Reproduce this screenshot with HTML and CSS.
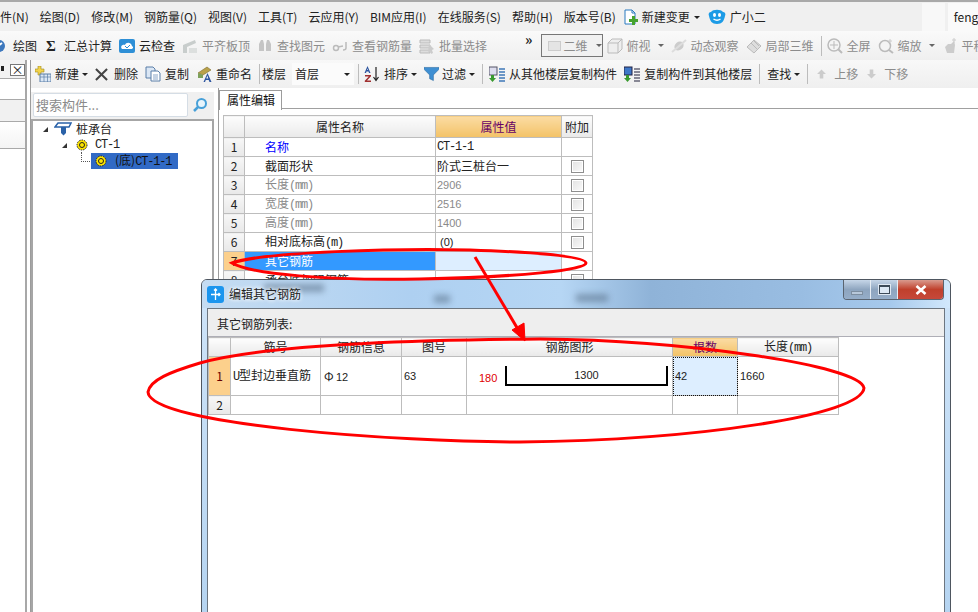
FILE: index.html

```html
<!DOCTYPE html>
<html lang="zh-CN">
<head>
  <meta charset="UTF-8" />
  <title>属性编辑</title>
  <link rel="stylesheet" href="styles.css">
</head>
<body>
  <div class="menubar">
    <span>件(N)</span><span>绘图(D)</span><span>修改(M)</span><span>钢筋量(Q)</span><span>视图(V)</span><span>工具(T)</span><span>云应用(Y)</span><span>BIM应用(I)</span><span>在线服务(S)</span><span>帮助(H)</span><span>版本号(B)</span>
    <span class="tool tool-change">
      <svg class="ico" viewBox="0 0 16 16"><path d="M3 1h7l3 3v11H3z" fill="#fff" stroke="#2b7bc0"/><path d="M10 1v3h3" fill="none" stroke="#2b7bc0"/><path d="M10 7h3v3h3v3h-3v3h-3v-3H7v-3h3z" fill="#46a32f"/></svg>
      新建变更<i class="caret"></i>
    </span>
    <span class="tool tool-q">
      <svg class="ico ico-q" viewBox="0 0 18 18"><path d="M3 4C5 1 13 1 15 4c2 0 3 2 2 4-1 5-3 8-8 8S2 13 1 8C0 6 1 4 3 4z" fill="#1c9be6"/><ellipse cx="6.500" cy="7" rx="1.500" ry="2" fill="#fff"/><ellipse cx="11.500" cy="7" rx="1.500" ry="2" fill="#fff"/><path d="M5.500 11q3.500 2.500 7 0" fill="none" stroke="#fff" stroke-width="1.300"/></svg>
      广小二
    </span>
    <span class="user-gap"></span>
    <span class="user">feng</span>
  </div>

  <div class="toolbar tb-main">
    <span class="tool tool-first">
      <svg class="ico" viewBox="0 0 16 16"><circle cx="6" cy="8" r="6" fill="#3d78bd"/><path d="M2 10l7-5" stroke="#fff" stroke-width="2"/></svg>
      绘图
    </span>
    <span class="tool tool-sum"><b class="sigma">Σ</b>汇总计算</span>
    <span class="tool">
      <svg class="ico" viewBox="0 0 16 16"><rect x="0" y="1" width="16" height="14" rx="2" fill="#2e8fd6"/><path d="M3 11c-2-2 0-5 3-4 1-3 6-3 7 1 2 1 1 3-1 3z" fill="#fff"/><path d="M6 8l2 2 3-3" fill="none" stroke="#2e8fd6"/></svg>
      云检查
    </span>
    <span class="tool off">
      <svg class="ico" viewBox="0 0 16 16"><path d="M1 7l12-5 1 3-9 4v6H1z" fill="#c8cdcc"/><path d="M7 10h8v5H7z" fill="#dcdfde"/></svg>
      平齐板顶
    </span>
    <span class="tool off">
      <svg class="ico" viewBox="0 0 16 16"><path d="M2 6l2-4h2l1 4v7H2zM9 6l1-4h2l2 4v7H9z" fill="#c5c5c5"/></svg>
      查找图元
    </span>
    <span class="tool off">
      <svg class="ico" viewBox="0 0 16 16"><circle cx="4" cy="10" r="2.500" fill="none" stroke="#bbb" stroke-width="1.500"/><path d="M6 9l5-1M14 4v6q0 2-3 2" fill="none" stroke="#bbb" stroke-width="1.500"/></svg>
      查看钢筋量
    </span>
    <span class="tool off">
      <svg class="ico" viewBox="0 0 16 16"><path d="M1 2h10v3H1zM1 7h10v3H1zM1 12h10v3H1z" fill="#ddd" stroke="#bbb"/><path d="M10 6l5 5-2 1 1 3-2 1-1-3-2 1z" fill="#ccc"/></svg>
      批量选择
    </span>
    <span class="chevrons">»</span>
    <span class="view-box">
      <i class="view-swatch"></i>二维<i class="caret"></i>
    </span>
    <span class="tool off tool-tight">
      <svg class="ico" viewBox="0 0 16 16"><path d="M1 5l4-4h10v10l-4 4H1zM1 5h10v10M11 5l4-4" fill="#eee" stroke="#bbb"/></svg>
      俯视<i class="caret"></i>
    </span>
    <span class="tool off">
      <svg class="ico" viewBox="0 0 16 16"><ellipse cx="8" cy="8" rx="5" ry="4" transform="rotate(-40 8 8)" fill="#ccc"/><path d="M1 14Q6 10 15 2" stroke="#ddd" stroke-width="2" fill="none"/></svg>
      动态观察
    </span>
    <span class="tool off">
      <svg class="ico" viewBox="0 0 16 16"><path d="M1 9l7-7 7 6-7 7z" fill="#ddd" stroke="#bbb"/><path d="M5 5l6 6M8 3l5 5" stroke="#bbb"/></svg>
      局部三维
    </span>
    <i class="sep sep-main"></i>
    <span class="tool off">
      <svg class="ico" viewBox="0 0 16 16"><circle cx="7" cy="7" r="6" fill="#f4f4f4" stroke="#bbb" stroke-width="1.500"/><path d="M11 11l4 4" stroke="#bbb" stroke-width="2"/><path d="M7 3v8M3 7h8" stroke="#bbb"/></svg>
      全屏
    </span>
    <span class="tool off tool-tight">
      <svg class="ico" viewBox="0 0 16 16"><circle cx="7" cy="8" r="5.500" fill="#f4f4f4" stroke="#bbb" stroke-width="1.500"/><path d="M11 12l4 3" stroke="#bbb" stroke-width="2"/><path d="M12 1v4M10 3h4" stroke="#ccc"/></svg>
      缩放<i class="caret"></i>
    </span>
    <span class="tool off">
      <svg class="ico" viewBox="0 0 16 16"><path d="M3 9l3-3 3 0 3-3 1 4-1 8H5z" fill="#ccc"/><path d="M12 0v5M10 2h4" stroke="#ccc"/></svg>
      平移
    </span>
  </div>

  <div class="workspace">
    <div class="side-strip">
      <div class="strip-head"><i class="pin"></i><i class="close-box">×</i></div>
      <div class="strip-row"></div>
      <div class="strip-row strip-grey"></div>
      <div class="strip-row strip-tall"></div>
    </div>

    <div class="work-main">
      <div class="toolbar tb-edit">
        <span class="tool">
          <svg class="ico" viewBox="0 0 16 16"><path d="M3 0h3v3h3v3H6v3H3V6H0V3h3z" fill="#f3d34a" stroke="#a08a20" stroke-width=".6"/><rect x="5" y="8" width="11" height="8" fill="#dbe7f5" stroke="#5b7fa8"/><path d="M5 11h11M9 8v8M12.500 8v8" stroke="#5b7fa8" stroke-width=".7"/></svg>
          新建<i class="caret"></i>
        </span>
        <span class="tool tool-del">
          <svg class="ico ico-x" viewBox="0 0 14 14"><path d="M1 1l12 12M13 1L1 13" stroke="#444" stroke-width="2.200"/></svg>
          删除
        </span>
        <span class="tool">
          <svg class="ico" viewBox="0 0 16 16"><path d="M1 1h7l2 2v9H1z" fill="#dbe7f5" stroke="#5b7fa8"/><path d="M6 5h7l2 2v8H6z" fill="#fff" stroke="#5b7fa8"/><path d="M8 9h5M8 11h5M8 13h5" stroke="#8aa6c8"/></svg>
          复制
        </span>
        <span class="tool">
          <svg class="ico" viewBox="0 0 16 16"><path d="M2 7l9-6 4 3-8 5z" fill="#b9a14a" stroke="#7c6b2c" stroke-width=".6"/><path d="M2 7l5 2v3H2z" fill="#7da05a"/><path d="M11.500 7L15.500 16H13.500L12.700 14H9.800L9 16H7.500zM11.300 9.500L10.300 12.500H12.300z" fill="#2d55a0"/></svg>
          重命名
        </span>
        <i class="sep"></i>
        <span class="floor-label">楼层</span>
        <span class="floor-select">首层<i class="caret"></i></span>
        <i class="sep sep-floor"></i>
        <span class="tool">
          <svg class="ico" viewBox="0 0 16 16"><path d="M3.500 0L6.500 7H5L4.500 5.500h-2L2 7H.5zM3.500 2.500L3 4h1z" fill="#2d55a0"/><path d="M1 9h6v1.300L3 14.500h4V16H.8v-1.300L4.800 10.500H1z" fill="#a03030"/><path d="M12 1v13M9.500 11l2.500 3.500 2.500-3.500" fill="none" stroke="#222" stroke-width="1.200"/></svg>
          排序<i class="caret"></i>
        </span>
        <span class="tool tool-filter">
          <svg class="ico" viewBox="0 0 16 16"><path d="M0 1h16v2l-6 6v6l-4-2V9L0 3z" fill="#3f8fd2" stroke="#27679e" stroke-width=".6"/></svg>
          过滤<i class="caret"></i>
        </span>
        <i class="sep sep-close"></i>
        <span class="tool">
          <svg class="ico" viewBox="0 0 16 16"><rect x="0" y="1" width="8" height="8" fill="#dde" stroke="#556"/><path d="M2 9h3v3h2l-3.500 4L0 12h2z" fill="#3a9a30"/><path d="M10 3h6M10 6h6M10 9h6M10 12h6M10 15h6" stroke="#3f78b8" stroke-width="1.500"/></svg>
          从其他楼层复制构件
        </span>
        <span class="tool">
          <svg class="ico" viewBox="0 0 16 16"><rect x="0" y="1" width="8" height="8" fill="#3f78c8" stroke="#224"/><path d="M2 9h3v3h2l-3.500 4L0 12h2z" fill="#3a9a30"/><path d="M10 3h6M10 6h6M10 9h6M10 12h6M10 15h6" stroke="#667" stroke-width="1.500"/></svg>
          复制构件到其他楼层
        </span>
        <i class="sep"></i>
        <span class="tool">查找<i class="caret"></i></span>
        <i class="sep"></i>
        <span class="tool off tool-move">
          <svg class="ico ico-arrow" viewBox="0 0 10 10"><path d="M5 0l5 5H7v5H3V5H0z" fill="#ccc"/></svg>
          上移
        </span>
        <span class="tool off tool-move">
          <svg class="ico ico-arrow" viewBox="0 0 10 10"><path d="M5 10l5-5H7V0H3v5H0z" fill="#ccc"/></svg>
          下移
        </span>
      </div>

      <div class="panels">
        <div class="tree-col">
          <div class="search">
            <span class="search-box">搜索构件...</span>
            <svg class="search-ico" viewBox="0 0 16 16"><circle cx="9.500" cy="6.500" r="4.500" fill="#e8f5fc" stroke="#47a0d8" stroke-width="2"/><path d="M6 10l-4 4" stroke="#47a0d8" stroke-width="2.500"/></svg>
          </div>
          <div class="tree">
            <div class="node node-root">
              <i class="expander"></i>
              <svg class="ico ico-pile" viewBox="0 0 18 14"><path d="M4 1h13l-2 4H1z" fill="#fff" stroke="#2a62a8" stroke-width="1.500"/><path d="M7 5h5v6l-2.500 2.500L7 11z" fill="#2a62a8"/></svg>
              <span>桩承台</span>
            </div>
            <div class="node node-ct">
              <i class="expander"></i>
              <svg class="ico ico-gear" viewBox="0 0 12 12"><circle cx="6" cy="6" r="5" fill="#ffe600" stroke="#222" stroke-dasharray="1.500 1"/><circle cx="6" cy="6" r="2.500" fill="none" stroke="#222"/></svg>
              <span class="mono">CT-1</span>
            </div>
            <div class="node node-leaf">
              <i class="connector"></i>
              <span class="leaf-sel">
                <svg class="ico ico-gear" viewBox="0 0 12 12"><circle cx="6" cy="6" r="5" fill="#ffe600" stroke="#222" stroke-dasharray="1.500 1"/><circle cx="6" cy="6" r="2.500" fill="none" stroke="#222"/></svg>
                <span class="leaf-text">(底)<span class="mono">CT-1-1</span></span>
              </span>
            </div>
          </div>
        </div>

        <div class="props">
          <div class="tabs"><span class="tab">属性编辑</span></div>
          <table class="grid prop-grid">
            <colgroup><col class="c-pn"><col class="c-pname"><col class="c-pval"><col class="c-pext"></colgroup>
            <tr class="head"><th></th><th>属性名称</th><th class="hot">属性值</th><th>附加</th></tr>
            <tr><td class="num">1</td><td class="name link">名称</td><td class="mono">CT-1-1</td><td></td></tr>
            <tr><td class="num">2</td><td class="name">截面形状</td><td>阶式三桩台一</td><td class="chk"><i></i></td></tr>
            <tr class="muted"><td class="num">3</td><td class="name">长度<span class="mono">(mm)</span></td><td class="digits">2906</td><td class="chk"><i></i></td></tr>
            <tr class="muted"><td class="num">4</td><td class="name">宽度<span class="mono">(mm)</span></td><td class="digits">2516</td><td class="chk"><i></i></td></tr>
            <tr class="muted"><td class="num">5</td><td class="name">高度<span class="mono">(mm)</span></td><td class="digits">1400</td><td class="chk"><i></i></td></tr>
            <tr><td class="num">6</td><td class="name">相对底标高<span class="mono">(m)</span></td><td class="digits">&nbsp;(0)</td><td class="chk"><i></i></td></tr>
            <tr class="active"><td class="num">7</td><td class="name">其它钢筋</td><td class="val"></td><td></td></tr>
            <tr><td class="num">8</td><td class="name">承台底加强钢筋</td><td></td><td class="chk"><i></i></td></tr>
          </table>
        </div>
      </div>
    </div>
  </div>

  <div class="dialog">
    <div class="dlg-title">
      <i class="ghost ghost-a"></i><i class="ghost ghost-b"></i><i class="ghost ghost-c"></i>
      <svg class="dlg-ico" viewBox="0 0 17 17"><rect width="17" height="17" rx="3" fill="#1b95ee"/><path d="M8.500 3v11M4 8.500h9M7 4.500l1.500-1.500 1.500 1.500M11.500 7l1.500 1.500-1.500 1.500" fill="none" stroke="#fff" stroke-width="1.300"/></svg>
      <span class="dlg-name">编辑其它钢筋</span>
      <div class="win-btns">
        <span class="win-btn"><i class="glyph-min"></i></span>
        <span class="win-btn"><i class="glyph-max"></i></span>
        <span class="win-btn win-close">
          <svg viewBox="0 0 12 10" class="glyph-x"><path d="M1.500 1l9 8M10.500 1l-9 8" stroke="#fff" stroke-width="2.600"/></svg>
        </span>
      </div>
    </div>
    <div class="dlg-body">
      <div class="dlg-label">其它钢筋列表:</div>
      <table class="grid bar-grid">
        <colgroup><col class="c-n"><col class="c-code"><col class="c-info"><col class="c-shape"><col class="c-fig"><col class="c-count"><col class="c-len"></colgroup>
        <tr class="head"><th></th><th>筋号</th><th>钢筋信息</th><th>图号</th><th>钢筋图形</th><th class="hot">根数</th><th>长度<span class="mono">(mm)</span></th></tr>
        <tr class="bar-row">
          <td class="num num-hot">1</td>
          <td><span class="mono">U</span>型封边垂直筋</td>
          <td class="info-cell"><span class="sym">Φ</span><span class="digits">12</span></td>
          <td class="digits">63</td>
          <td>
            <div class="bar-fig">
              <span class="digits bar-side">180</span>
              <span class="digits bar-shape">1300</span>
            </div>
          </td>
          <td class="digits cell-focus">42</td>
          <td class="digits">1660</td>
        </tr>
        <tr><td class="num">2</td><td></td><td></td><td></td><td></td><td></td><td></td></tr>
      </table>
    </div>
  </div>

  <svg class="marks" viewBox="0 0 978 612">
    <path d="M232 263C262 252 400 248 470 250C530 252 586 256 586 263C586 270 520 277 420 279C330 281 250 274 232 263Z"/>
    <path d="M148 392C150 380 170 372 200 363C260 346 400 340 540 339C680 340 860 365 864 388C862 415 700 440 520 442C400 442 150 425 148 392Z"/>
    <path d="M475 257L519 331"/>
    <path class="head-mark" d="M512 330L524 323L525 341Z"/>
  </svg>
</body>
</html>
```

FILE: styles.css

```css
* {
  box-sizing: border-box;
}
html, body {
  margin: 0;
  padding: 0;
}
body {
  position: relative;
  width: 978px;
  height: 612px;
  overflow: hidden;
  background: #fff;
  color: #222;
  font-family: "Noto Sans CJK SC", "Liberation Sans", sans-serif;
  font-size: 12px;
  line-height: 16px;
}
i {
  font-style: normal;
}
.mono {
  font-family: "Liberation Mono", "Noto Sans CJK SC", monospace;
  font-size: 12px;
  letter-spacing: -1.2px;
}
.digits {
  font-family: "Liberation Sans", sans-serif;
  font-size: 11px;
}

/* menu */
.menubar {
  height: 31px;
  padding-top: 1px;
  display: flex;
  align-items: center;
  gap: 11px;
  background: #f0f0f0;
  border-top: 2px solid #a9a9a9;
  white-space: nowrap;
}
.tool {
  display: flex;
  align-items: center;
  gap: 4px;
  white-space: nowrap;
}
.tool-change {
  margin-left: -5px;
}
.ico {
  width: 16px;
  height: 16px;
  flex: none;
}
.ico-q {
  width: 18px;
  height: 18px;
}
.tool-q {
  margin-left: -3px;
}
.user-gap {
  width: 23px;
  height: 28px;
  margin-left: 145px;
  background: #f8f8f8;
}
.user {
  margin-left: -8px;
  padding-left: 6px;
  width: 30px;
  height: 28px;
  line-height: 28px;
  background: #fafafa;
}
.caret {
  display: inline-block;
  width: 0;
  height: 0;
  border-top: 3px solid #222;
  border-left: 3px solid transparent;
  border-right: 3px solid transparent;
}

/* toolbars */
.toolbar {
  display: flex;
  align-items: center;
  white-space: nowrap;
}
.tb-main {
  height: 29px;
  gap: 7px;
  background: linear-gradient(#fafafa, #efefef);
}
.off {
  color: #8c8c8c;
}
.off .caret {
  border-top-color: #666;
}
.tool-first {
  margin-left: -7px;
  margin-right: 2px;
}
.tool-sum {
  gap: 8px;
}
.sigma {
  width: 10px;
  font-size: 15px;
  font-family: "Liberation Serif", serif;
}
.chevrons {
  margin-left: 31px;
  margin-top: -14px;
  width: 12px;
  font-size: 14px;
  font-weight: 700;
  line-height: 14px;
}
.view-box {
  display: flex;
  align-items: center;
  width: 62px;
  height: 23px;
  padding-left: 3px;
  margin-left: 1px;
  margin-right: -3px;
  gap: 3px;
  color: #8c8c8c;
  border: 1px solid #777;
  background: #f1f1f1;
}
.view-box .caret {
  margin-left: 5px;
  border-top-color: #666;
}
.view-swatch {
  width: 14px;
  height: 10px;
  margin-left: 3px;
  border: 1px solid #ccc;
  background: #e4e4e4;
}
.tool-tight .caret {
  margin-left: 3px;
}
.sep {
  width: 1px;
  height: 20px;
  flex: none;
  background: #bcbcbc;
}
.sep-main {
  margin-right: -2px;
}
.sep-floor {
  margin: 0 -2px 0 -3px;
}
.sep-close {
  margin: 0 -1px 0 0;
}

.workspace {
  display: flex;
  height: 552px;
}
.side-strip {
  width: 31px;
  flex: none;
  border-right: 1px solid #9c9c9c;
  position: relative;
}
.side-strip::after {
  content: "";
  position: absolute;
  left: 25px;
  top: 0;
  bottom: 0;
  width: 2px;
  background: #a8a8a8;
}
.strip-head {
  height: 18px;
  padding-top: 4px;
  display: flex;
  justify-content: flex-end;
  align-items: flex-start;
  width: 25px;
  background: #f2f2f2;
}
.pin {
  width: 3px;
  height: 5px;
  margin: 2px 6px 0 0;
  background: #222;
}
.close-box {
  width: 15px;
  height: 12px;
  line-height: 10px;
  text-align: center;
  border: 1px solid #777;
  background: #fff;
}
.strip-row {
  width: 25px;
  height: 22px;
  border-bottom: 1px solid #a9a9a9;
  border-top: 1px solid #a9a9a9;
  background: #fff;
}
.strip-grey {
  background: #f1f1f1;
  border-top: 0;
}
.strip-tall {
  height: 27px;
  border-top: 0;
  background: linear-gradient(#fff, #f4f4f4);
}

.work-main {
  flex: 1;
  min-width: 0;
}
.tb-edit {
  height: 28px;
  gap: 7px;
  padding-left: 4px;
  background: linear-gradient(#f8f8f8, #efefef);
}
.tb-edit .caret {
  margin-left: -1px;
}
.tool-del {
  gap: 6px;
}
.tool-filter .ico {
  width: 15px;
  margin-right: -1px;
}
.ico-x {
  width: 13px;
  height: 13px;
}
.floor-label {
  margin-left: -5px;
}
.floor-select {
  display: flex;
  align-items: center;
  justify-content: space-between;
  width: 62px;
  height: 22px;
  padding: 0 4px 0 3px;
  margin-left: -1px;
  background: #fbfbfb;
}
.ico-arrow {
  width: 9px;
  height: 10px;
}
.tool-move {
  gap: 8px;
  margin-left: 2px;
}

.panels {
  display: flex;
  height: 524px;
}
.tree-col {
  width: 183px;
  flex: none;
}
.search {
  height: 31px;
  padding: 5px 0 0 2px;
  display: flex;
  background: linear-gradient(#fff 4px, #f0f0f0 4px);
}
.search-box {
  width: 155px;
  height: 24px;
  line-height: 22px;
  padding-left: 2px;
  color: #8a8a8a;
  font-size: 13px;
  background: #fff;
  border: 1px solid #d5dde5;
  border-radius: 2px;
}
.search-ico {
  width: 16px;
  height: 16px;
  margin: 4px 0 0 4px;
}
.tree {
  height: 493px;
  border: 2px solid #a6a6a6;
  border-bottom: 0;
  background: #fff;
}
.node {
  display: flex;
  align-items: center;
  height: 16px;
}
.expander {
  width: 0;
  height: 0;
  border-bottom: 5px solid #333;
  border-left: 5px solid transparent;
}
.node-root {
  padding-left: 10px;
  height: 18px;
  margin-top: -1px;
  margin-bottom: -1px;
}
.ico-pile {
  width: 18px;
  height: 14px;
  margin: 0 4px 0 6px;
}
.node-ct {
  padding-left: 29px;
}
.ico-gear {
  width: 12px;
  height: 12px;
  margin: 0 7px 0 9px;
}
.node-leaf {
  padding-left: 48px;
}
.connector {
  width: 9px;
  height: 10px;
  margin-top: -8px;
  border-left: 1px dotted #555;
  border-bottom: 1px dotted #555;
}
.leaf-sel {
  display: flex;
  align-items: center;
  width: 87px;
  height: 16px;
  margin-left: 1px;
  background: #316ac5;
}
.leaf-sel .ico-gear {
  margin: 0 8px 0 4px;
}
.leaf-text {
  color: #111;
}

.props {
  flex: 1;
  min-width: 0;
  border-left: 1px solid #9c9c9c;
  margin-left: 4px;
  position: relative;
}
.tabs {
  height: 21px;
  padding-top: 2px;
  border-bottom: 1px solid #a0a0a0;
}
.tab {
  display: block;
  width: 63px;
  height: 20px;
  line-height: 18px;
  padding-left: 7px;
  color: #111;
  background: #fff;
  border: 1px solid #9c9c9c;
  border-bottom: 0;
}

/* grids */
.grid {
  table-layout: fixed;
  border-collapse: collapse;
  background: #fff;
}
.grid th, .grid td {
  padding: 0;
  border: 1px solid #bdbdbd;
  font-weight: 400;
  white-space: nowrap;
  overflow: hidden;
}
.prop-grid {
  margin: 6px 0 0 4px;
  width: 369px;
}
.prop-grid tr {
  height: 19px;
}
.prop-grid .head {
  height: 22px;
}
.c-pn { width: 21px; }
.c-pname { width: 191px; }
.c-pval { width: 126px; }
.c-pext { width: 31px; }
.grid .head th {
  background: linear-gradient(#fdfdfd, #e9e9e9);
  text-align: center;
}
.grid .head .hot {
  color: #660066;
  background: linear-gradient(#fbdca4, #f3c266);
}
.grid .num {
  text-align: center;
  background: linear-gradient(#f7f7f7, #e8e8e8);
}
.grid .link {
  color: #0000ff;
}
.prop-grid td {
  padding-left: 1px;
}
.prop-grid .num {
  padding-left: 0;
}
.prop-grid .name {
  padding-left: 20px;
}
.muted td {
  color: #8a8a8a;
}
.muted .num {
  color: #222;
}
.chk {
  text-align: center;
}
.chk i {
  display: block;
  width: 13px;
  height: 13px;
  margin: 0 auto;
  border: 1px solid #8e8e8e;
  background: linear-gradient(135deg, #e2e2e2, #fbfbfb);
  box-shadow: inset 0 0 0 1px #fff;
}
.active .num {
  background: #fcd08c;
}
.grid .active .name {
  color: #fff;
  background: #3399ff;
}
.active .val {
  background: #ddeeff;
}

/* dialog */
.dialog {
  position: absolute;
  left: 201px;
  top: 279px;
  width: 750px;
  height: 340px;
  padding: 0 5px;
  border: 1px solid #4e5660;
  border-radius: 6px 6px 0 0;
  background: linear-gradient(#cfe4f8, #b5d4f1);
}
.dlg-title {
  position: relative;
  height: 28px;
  margin: 0 -5px;
  padding: 6px 0 0 5px;
  display: flex;
  align-items: flex-start;
  border-radius: 5px 5px 0 0;
  background: linear-gradient(90deg, #c5dcf2 0, #aed0f1 28%, #b6d6f4 48%, #8fb3d8 60%, #99bde2 80%, #a6c9ec 92%, #d2e8fc 100%);
  overflow: hidden;
}
.ghost {
  position: absolute;
  height: 8px;
  background: #566d85;
  opacity: .55;
  filter: blur(3px);
}
.ghost-a { left: 62px; top: 4px; width: 60px; }
.ghost-b { left: 232px; top: 15px; width: 16px; }
.ghost-c { left: 374px; top: 14px; width: 32px; }
.dlg-ico {
  width: 17px;
  height: 17px;
  flex: none;
}
.dlg-name {
  margin-left: 5px;
  position: relative;
  color: #222;
  text-shadow: 0 0 4px #fff, 0 0 4px #fff;
}
.win-btns {
  position: absolute;
  top: 0;
  right: 6px;
  display: flex;
  height: 20px;
  border: 1px solid #5a6470;
  border-top: 0;
  border-radius: 0 0 4px 4px;
  overflow: hidden;
}
.win-btn {
  width: 27px;
  display: flex;
  align-items: center;
  justify-content: center;
  border-right: 1px solid #e6edf4;
  background: linear-gradient(#c6d6e8, #8ea5bf 50%, #95adc8);
}
.win-close {
  width: 45px;
  border-right: 0;
  background: linear-gradient(#d99a8e, #c0402c 50%, #c6483a);
}
.glyph-min {
  width: 12px;
  height: 4px;
  margin-top: 6px;
  border: 1px solid #7d8ea0;
  background: #b8c8da;
}
.glyph-max {
  width: 11px;
  height: 9px;
  border: 1px solid #3c4a58;
  border-top-width: 2px;
  background: #dce8f4;
  box-shadow: 0 0 0 1px #dfe8f2;
}
.glyph-x {
  width: 12px;
  height: 10px;
}
.dlg-body {
  height: 304px;
  border: 1px solid #6d7680;
  border-bottom: 0;
  background: #fff;
}
.dlg-label {
  height: 28px;
  padding: 7px 0 0 9px;
  color: #222;
  background: #eee;
  border-bottom: 1px solid #aeaeb6;
}
.bar-grid {
  margin: 0;
  width: 630px;
}
.c-n { width: 22px; }
.c-code { width: 90px; }
.c-info { width: 81px; }
.c-shape { width: 65px; }
.c-fig { width: 206px; }
.c-count { width: 65px; }
.c-len { width: 101px; }
.bar-grid tr {
  height: 19px;
}
.bar-grid .bar-row {
  height: 39px;
}
.bar-grid td {
  padding-left: 2px;
}
.bar-grid .num {
  padding-left: 0;
}
.grid .num-hot {
  color: #660000;
  background: #fcd08c;
}
.grid .info-cell {
  padding-left: 3px;
}
.sym {
  display: inline-block;
  width: 12px;
}
.bar-fig {
  display: flex;
  align-items: flex-end;
  height: 20px;
  padding-left: 10px;
}
.bar-side {
  width: 26px;
  color: #e00000;
}
.bar-shape {
  width: 163px;
  height: 20px;
  padding-top: 1px;
  text-align: center;
  border: 2px solid #000;
  border-top: 0;
}
.grid .cell-focus {
  background: #ddeeff;
  outline: 1px dotted #111;
  outline-offset: -1px;
}

/* red marks drawn over the screenshot */
.marks {
  position: absolute;
  left: 0;
  top: 0;
  width: 978px;
  height: 612px;
  pointer-events: none;
}
.marks path {
  fill: none;
  stroke: #ff0000;
  stroke-width: 3;
}
.marks .head-mark {
  fill: #ff0000;
  stroke-width: 1;
}
```
